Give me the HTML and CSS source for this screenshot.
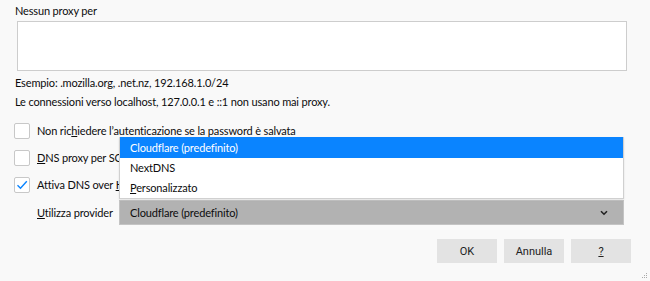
FILE: index.html
```html
<!DOCTYPE html>
<html lang="it">
<head>
  <meta charset="UTF-8" />
  <title>Impostazioni connessione</title>
  <link rel="stylesheet" href="styles.css">
</head>
<body>
  <div class="dialog">
    <div class="field-label">Nessun proxy per</div>
    <div class="textarea"></div>
    <div class="hint">Esempio: .mozilla.org, .net.nz, 192.168.1.0/24</div>
    <div class="hint hint-second">Le connessioni verso localhost, 127.0.0.1 e ::1 non usano mai proxy.</div>

    <div class="options">
      <div class="option">
        <span class="checkbox"></span>
        <span>Non ric<u>h</u>iedere l’autenticazione se la password è salvata</span>
      </div>
      <div class="option">
        <span class="checkbox"></span>
        <span><u>D</u>NS proxy per SOCKS v5</span>
      </div>
      <div class="option">
        <span class="checkbox checked">
          <svg width="12" height="10" viewBox="0 0 12 10">
            <path d="M1.5 5.2 L4.5 8.2 L10.8 1.2" fill="none" stroke="#0a84ff" stroke-width="1.4"/>
          </svg>
        </span>
        <span>Attiva DNS over <u>H</u>TTPS</span>
      </div>
      <div class="provider-row">
        <span class="provider-label"><u>U</u>tilizza provider</span>
        <div class="select">
          <span>Cloudflare (predefinito)</span>
          <svg class="chevron" width="8" height="6" viewBox="0 0 8 6">
            <path d="M1 1.2 L4 4.2 L7 1.2" fill="none" stroke="#222" stroke-width="1.6"/>
          </svg>
        </div>
      </div>
    </div>

    <div class="buttons">
      <button class="btn">OK</button>
      <button class="btn">Annulla</button>
      <button class="btn"><u>?</u></button>
    </div>

    <ul class="popup">
      <li class="selected">Cloudflare (predefinito)</li>
      <li>NextDNS</li>
      <li><u>P</u>ersonalizzato</li>
    </ul>

    <svg class="grip" width="8" height="8" viewBox="0 0 8 8">
      <rect x="6" y="2" width="1" height="1" fill="#aaa"/>
      <rect x="4" y="4" width="1" height="1" fill="#aaa"/>
      <rect x="6" y="4" width="1" height="1" fill="#aaa"/>
      <rect x="2" y="6" width="1" height="1" fill="#aaa"/>
      <rect x="4" y="6" width="1" height="1" fill="#aaa"/>
      <rect x="6" y="6" width="1" height="1" fill="#aaa"/>
    </svg>
  </div>
</body>
</html>
```

FILE: styles.css
```css
* {
  margin: 0;
  padding: 0;
  box-sizing: border-box;
}

body {
  background: #f9f9f9;
  color: #0c0c0d;
  font-family: Lato, "Open Sans", sans-serif;
  font-size: 11px;
  letter-spacing: -0.15px;
  line-height: 16px;
}

.dialog {
  position: relative;
  height: 281px;
  padding: 3px 19px 0 15px;
}

.field-label {
  height: 16px;
}

.textarea {
  margin: 2px 0 0 2px;
  width: 610px;
  height: 50px;
  background: #fff;
  border: 1px solid #cdcdcd;
}

.hint {
  margin-top: 4px;
}

.hint-second {
  margin-top: 3px;
}

.options {
  margin-top: 7px;
  display: flex;
  flex-direction: column;
}

.option {
  height: 27px;
  display: flex;
  align-items: center;
  gap: 7px;
}

.checkbox {
  width: 16px;
  height: 16px;
  margin-left: -1px;
  background: #fff;
  border: 1px solid #c8c8c8;
  border-radius: 2px;
  display: flex;
  align-items: center;
  justify-content: center;
}

.provider-row {
  margin-top: 2px;
  display: flex;
  align-items: center;
}

.provider-label {
  flex: 0 0 104px;
  min-width: 0;
  padding-left: 22px;
  white-space: nowrap;
}

.select {
  flex: 0 0 505px;
  height: 25px;
  background: #b2b2b2;
  border: 1px solid #c4c4c4;
  display: flex;
  align-items: center;
  justify-content: space-between;
  padding: 0 15px 0 10px;
}

.buttons {
  margin-top: 14px;
  display: flex;
  justify-content: flex-end;
  gap: 7px;
}

.btn {
  width: 60px;
  height: 24px;
  background: #e3e3e3;
  border: none;
  color: #222;
  font-family: Roboto, sans-serif;
  font-size: 11px;
}

.popup {
  position: absolute;
  left: 119px;
  top: 137px;
  width: 505px;
  list-style: none;
  background: #fff;
  border: 1px solid #d0d0d0;
  border-top: none;
  box-shadow: 0 1px 2px rgba(0, 0, 0, 0.1);

  & li {
    height: 20px;
    line-height: 20px;
    padding-left: 10px;
  }

  & li.selected {
    height: 21px;
    line-height: 21px;
    background: #0a84ff;
    color: #fff;
  }
}

.grip {
  position: absolute;
  right: 2px;
  bottom: 2px;
}
```
